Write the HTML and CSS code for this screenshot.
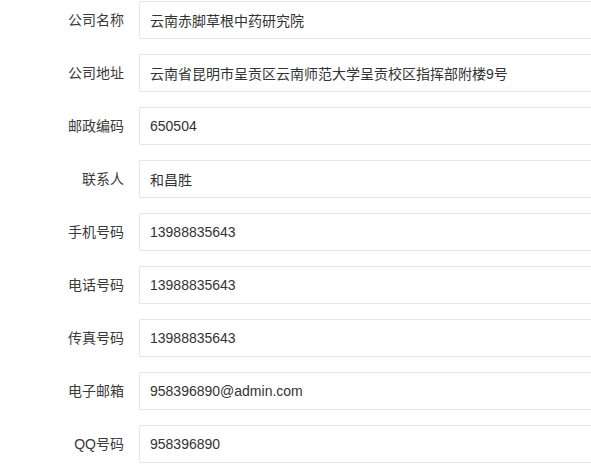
FILE: index.html
```html
<!DOCTYPE html>
<html lang="zh-CN">
<head>
<meta charset="utf-8">
<title>公司信息</title>
<link rel="stylesheet" href="styles.css">
</head>
<body>
<form class="form">
  <div class="item"><label class="label">公司名称</label><input class="input" value="云南赤脚草根中药研究院"></div>
  <div class="item"><label class="label">公司地址</label><input class="input" value="云南省昆明市呈贡区云南师范大学呈贡校区指挥部附楼9号"></div>
  <div class="item"><label class="label">邮政编码</label><input class="input" value="650504"></div>
  <div class="item"><label class="label">联系人</label><input class="input" value="和昌胜"></div>
  <div class="item"><label class="label">手机号码</label><input class="input" value="13988835643"></div>
  <div class="item"><label class="label">电话号码</label><input class="input" value="13988835643"></div>
  <div class="item"><label class="label">传真号码</label><input class="input" value="13988835643"></div>
  <div class="item"><label class="label">电子邮箱</label><input class="input" value="958396890@admin.com"></div>
  <div class="item"><label class="label">QQ号码</label><input class="input" value="958396890"></div>
</form>
</body>
</html>
```
FILE: styles.css
```css
html, body {
  margin: 0;
  padding: 0;
  background: #fff;
  overflow: hidden;
}
body {
  font-family: "Liberation Sans", "Noto Sans CJK SC", sans-serif;
  font-size: 14px;
  color: #333;
}
.form {
  padding: 1px 0 0 29px;
}
.item {
  display: flex;
  align-items: flex-start;
  margin-bottom: 15px;
}
.label {
  box-sizing: content-box;
  width: 80px;
  padding: 9px 15px;
  line-height: 20px;
  text-align: right;
  color: #3a3a3a;
  flex: none;
}
.input {
  box-sizing: border-box;
  flex: 1;
  min-width: 0;
  height: 38px;
  border: 1px solid #e6e6e6;
  border-right: none;
  border-radius: 2px 0 0 2px;
  padding: 0 10px;
  font: inherit;
  font-size: 14px;
  color: #333;
  background: #fff;
  outline: none;
}
```
